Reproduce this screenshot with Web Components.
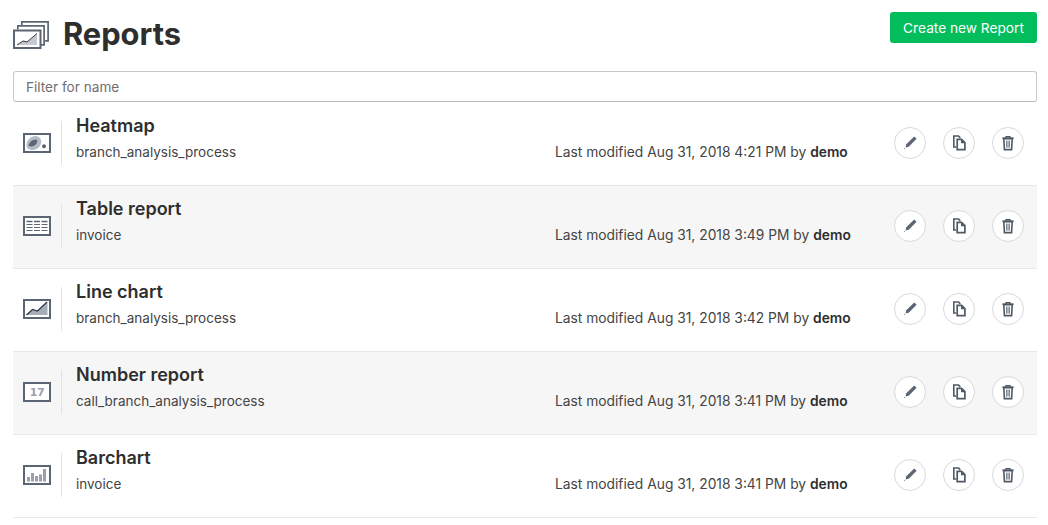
<!DOCTYPE html>
<html><head><meta charset="utf-8"><style>
html,body{margin:0;background:#fff}
body{font-family:Inter,"Liberation Sans",sans-serif;color:#2e2e2e}
</style></head><body>
<template id="t-page"><style>
:host{display:block;padding:12px 11px 0 13px;box-sizing:border-box;width:1048px}
</style><slot></slot></template>

<template id="t-header"><style>
:host{display:flex;align-items:flex-start;justify-content:space-between;height:59px}
.l{display:flex;align-items:center;gap:14px;padding-top:5px}
h1{margin:0;height:36px;font:700 30.8px/34px Inter,sans-serif;color:#2e2e2e;letter-spacing:0}
button{all:unset;box-sizing:border-box;width:147px;height:31px;background:#02bd5b;color:#fff;border-radius:3px;text-align:center;font:400 13.7px/32px Inter,sans-serif}
svg{display:block}
</style><div class="l"><svg width="36" height="28" viewBox="0 0 36 28" fill="none">
<path d="M8.800 4V.9h26.300v19h-3" stroke="#5b6573" stroke-width="1.700"/>
<path d="M4.800 8.500V4.900h26.300v19h-3" stroke="#5b6573" stroke-width="1.700"/>
<rect x="1" y="9.500" width="26.500" height="17.500" stroke="#5b6573" stroke-width="2" fill="#fff"/>
<path d="M4 24l6-4 4 1 10-8v11H4z" fill="#c5cad2"/>
<path d="M4 24l6-4 4 1 10-8.500" stroke="#2e3540" stroke-width="1"/>
</svg><h1><slot name="title"></slot></h1></div><button><slot name="action"></slot></button></template>

<template id="t-filter"><style>
:host{display:block;height:31px;margin-bottom:1px;box-sizing:border-box;border:1px solid #c8c8c8;border-bottom-color:#bdbdbd;border-radius:3px;padding:0 12px;font:400 13.6px/30px Inter,sans-serif;color:#6f6f6f;background:#fff}
</style><slot></slot></template>

<template id="t-row"><style>
:host{display:grid;grid-template-columns:48px 5px 479px 1fr auto;height:83px;box-sizing:border-box;border-bottom:1px solid #e8e8e8;align-items:start;background:#fff;padding-left:10px}
:host([alt]){background:#f6f6f6}
.ic{grid-column:1;grid-row:1;padding-top:30px}
.ic ::slotted(svg){display:block}
.sep{grid-column:1;grid-row:1;justify-self:end;margin:18px 9px 0 0;width:1px;height:44px;background:#e3e3e3}
.txt{grid-column:3;grid-row:1;padding-top:12px}
.t{font:600 18px/22px Inter,sans-serif;color:#2e2e2e;white-space:nowrap}
.s{font:400 13.5px/18px Inter,sans-serif;color:#444;margin-top:6px;white-space:nowrap}
.m{grid-column:4;grid-row:1;padding-top:40px;font:400 13.8px/18px Inter,sans-serif;color:#444;white-space:nowrap}
.m b{font-weight:600;color:#2e2e2e}
.a{grid-column:5;grid-row:1;display:flex;gap:17px;padding:24px 13px 0 0}
</style>
<div class="ic"><slot name="icon"></slot></div><div class="sep"></div>
<div class="txt"><div class="t"><slot name="name"></slot></div><div class="s"><slot name="def"></slot></div></div>
<div class="m">Last modified <slot name="date"></slot> by <b><slot name="user"></slot></b></div>
<div class="a"><icon-btn kind="edit"></icon-btn><icon-btn kind="copy"></icon-btn><icon-btn kind="del"></icon-btn></div>
</template>

<script>
function tpl(name,id){customElements.define(name,class extends HTMLElement{constructor(){super();this.attachShadow({mode:'open'}).appendChild(document.getElementById(id).content.cloneNode(true));}});}
const paths={
edit:'<path d="M5.300 10.300l7.900-7.900 2.400 2.400-7.900 7.900-3.200.8z" fill="#5b6573"/><path d="M3 15.200l1.300-.4-.9-.9z" fill="#5b6573"/>',
copy:'<path d="M6.300 13H3.800V2h4.700l1.800 1.900" fill="none" stroke="#4f5966" stroke-width="1.600"/><path d="M7.200 5.300h4.400l3.300 3.300v7H7.200z" fill="none" stroke="#4f5966" stroke-width="1.700"/><path d="M11 5.300v3.900h3.900z" fill="#4f5966"/>',
del:'<path d="M3.300 4.200h11.400" stroke="#4f5966" stroke-width="1.500"/><path d="M7 4V2.700h4V4" fill="none" stroke="#4f5966" stroke-width="1.300"/><path d="M4.800 4.600h8.400l-.6 11H5.400z" fill="none" stroke="#4f5966" stroke-width="1.600"/><path d="M7.600 6.600v7M9 6.600v7M10.400 6.600v7" stroke="#4f5966" stroke-width=".8"/>'
};
customElements.define('icon-btn',class extends HTMLElement{constructor(){super();this.attachShadow({mode:'open'});}
connectedCallback(){this.shadowRoot.innerHTML='<style>:host{display:flex;align-items:center;justify-content:center;width:32px;height:32px;box-sizing:border-box;border:1px solid #d8d9de;border-radius:50%;background:#fff}svg{display:block}</style><svg width="18" height="18" viewBox="0 0 18 18">'+paths[this.getAttribute('kind')]+'</svg>';}});
tpl('reports-page','t-page');tpl('page-header','t-header');tpl('filter-box','t-filter');tpl('report-row','t-row');
</script>

<reports-page>
<page-header><span slot="title">Reports</span><span slot="action">Create new Report</span></page-header>
<filter-box>Filter for name</filter-box>

<report-row><svg slot="icon" width="28" height="20" viewBox="0 0 28 20"><rect x="1" y="1" width="26" height="18" fill="#fff" stroke="#5b6573" stroke-width="2"/><path d="M3.500 12c0-5 4.500-9 9-9 4.500 0 6.500 4 5.500 7.500-1 4-5 6.500-8.500 6.500C6 17 3.500 15.500 3.500 12z" fill="#b6bcc6"/><path d="M5.500 12.500c1-3.500 4-6.500 8-6 1.500 1.500.5 4.500-2 6-2 1-4.500 1.500-6 0z" fill="#5b6573"/><circle cx="21" cy="13.300" r="2" fill="#5b6573"/></svg><span slot="name">Heatmap</span><span slot="def">branch_analysis_process</span><span slot="date">Aug 31, 2018 4:21 PM</span><span slot="user">demo</span></report-row>

<report-row alt><svg slot="icon" width="28" height="20" viewBox="0 0 28 20"><rect x="1" y="1" width="26" height="18" fill="#fff" stroke="#5b6573" stroke-width="2"/><path d="M3.500 5.500h6M11 5.500h6M18.500 5.500h6" stroke="#5b6573" stroke-width="1.500"/><path d="M3.500 8.500h6M11 8.500h6M18.500 8.500h6M3.500 11.500h6M11 11.500h6M18.500 11.500h6M3.500 14.500h6M11 14.500h6M18.500 14.500h6" stroke="#5b6573" stroke-width="1"/></svg><span slot="name">Table report</span><span slot="def">invoice</span><span slot="date">Aug 31, 2018 3:49 PM</span><span slot="user">demo</span></report-row>

<report-row><svg slot="icon" width="28" height="20" viewBox="0 0 28 20"><rect x="1" y="1" width="26" height="18" fill="#fff" stroke="#5b6573" stroke-width="2"/><path d="M3.500 16l6-5.500 5 1.500 10-9v13z" fill="#a7aeb9"/><path d="M3.500 16l6-5.500 5 1.500 9.500-9" stroke="#2e3540" stroke-width="1.200" fill="none"/></svg><span slot="name">Line chart</span><span slot="def">branch_analysis_process</span><span slot="date">Aug 31, 2018 3:42 PM</span><span slot="user">demo</span></report-row>

<report-row alt><svg slot="icon" width="28" height="20" viewBox="0 0 28 20"><rect x="1" y="1" width="26" height="18" fill="#fff" stroke="#5b6573" stroke-width="2"/><text x="14" y="14" text-anchor="middle" font-family="DejaVu Sans" font-weight="700" font-size="11" letter-spacing="-.5" fill="#9aa2ae">17</text></svg><span slot="name">Number report</span><span slot="def">call_branch_analysis_process</span><span slot="date">Aug 31, 2018 3:41 PM</span><span slot="user">demo</span></report-row>

<report-row><svg slot="icon" width="28" height="20" viewBox="0 0 28 20"><rect x="1" y="1" width="26" height="18" fill="#fff" stroke="#5b6573" stroke-width="2"/><path d="M4 12h3v4.500H4zM8 8h3v8.500H8zM12 11h3v5.500h-3zM16 9.500h3v7h-3zM20 4h3v12.500h-3z" fill="#98a0ad"/></svg><span slot="name">Barchart</span><span slot="def">invoice</span><span slot="date">Aug 31, 2018 3:41 PM</span><span slot="user">demo</span></report-row>
</reports-page>
</body></html>
